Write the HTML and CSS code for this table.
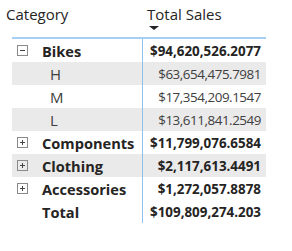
FILE: index.html
```html
<!DOCTYPE html>
<html>
<head>
<meta charset="utf-8">
<link rel="stylesheet" href="styles.css">
</head>
<body>
<div class="matrix">
  <div class="head">
    <div class="h-cat">Category</div>
    <div class="h-sales">
      <span>Total Sales</span>
      <span class="sort"></span>
    </div>
  </div>
  <div class="rule"></div>
  <div class="grid">
    <div class="row parent">
      <div class="cat"><span class="tog minus"></span>Bikes</div>
      <div class="val">$94,620,526.2077</div>
    </div>
    <div class="row child alt">
      <div class="cat">H</div>
      <div class="val">$63,654,475.7981</div>
    </div>
    <div class="row child">
      <div class="cat">M</div>
      <div class="val">$17,354,209.1547</div>
    </div>
    <div class="row child alt">
      <div class="cat">L</div>
      <div class="val">$13,611,841.2549</div>
    </div>
    <div class="row parent">
      <div class="cat"><span class="tog plus"></span>Components</div>
      <div class="val">$11,799,076.6584</div>
    </div>
    <div class="row parent alt">
      <div class="cat"><span class="tog plus"></span>Clothing</div>
      <div class="val">$2,117,613.4491</div>
    </div>
    <div class="row parent">
      <div class="cat"><span class="tog plus"></span>Accessories</div>
      <div class="val">$1,272,057.8878</div>
    </div>
    <div class="row parent total">
      <div class="cat">Total</div>
      <div class="val">$109,809,274.203</div>
    </div>
  </div>
</div>
</body>
</html>
```

FILE: styles.css
```css
* { box-sizing: border-box; }
html, body { margin: 0; padding: 0; background: #fff; }
body {
  font-family: "Open Sans", "Noto Sans", sans-serif;
  color: #252423;
  width: 292px;
  height: 251px;
  overflow: hidden;
}
.head {
  display: flex;
  height: 37px;
  font-size: 15px;
  color: #252423;
}
.h-cat {
  width: 142px;
  padding-left: 6px;
  padding-top: 4px;
}
.h-sales {
  display: flex;
  flex-direction: column;
  padding-left: 5px;
  padding-top: 4px;
}
.sort {
  margin-top: 2px;
  margin-left: 2px;
  width: 0;
  height: 0;
  border-left: 5px solid transparent;
  border-right: 5px solid transparent;
  border-top: 4px solid #252423;
}
.rule {
  margin-left: 12px;
  width: 254px;
  height: 2px;
  background: #a6cff5;
}
.grid {
  margin-left: 12px;
  width: 254px;
}
.row {
  display: grid;
  grid-template-columns: 130px 124px;
  height: 23px;
  font-size: 13.4px;
}
.row.alt { background: #eaeaea; }
.cat {
  display: flex;
  align-items: center;
  padding-left: 5px;
  white-space: nowrap;
  font-size: 14.6px;
}
.parent .cat { font-weight: 700; }
.parent .cat { padding-left: 30px; }
.parent .cat .tog { margin-left: -25px; margin-right: 14px; }
.child .cat { padding-left: 38px; color: #404040; font-size: 15px; }
.val {
  border-left: 1px solid #8cc1f0;
  display: flex;
  align-items: center;
  justify-content: flex-end;
  padding-right: 5px;
  white-space: nowrap;
}
.parent .val { font-weight: 700; }
.child .val { color: #404040; letter-spacing: -0.45px; }
.tog {
  position: relative;
  width: 11px;
  height: 11px;
  border: 1px solid #8a8a8a;
  flex: none;
}
.tog::before {
  content: "";
  position: absolute;
  left: 2px;
  top: 4px;
  width: 5px;
  height: 1px;
  background: #444;
}
.tog.plus::after {
  content: "";
  position: absolute;
  left: 4px;
  top: 2px;
  width: 1px;
  height: 5px;
  background: #444;
}
```
